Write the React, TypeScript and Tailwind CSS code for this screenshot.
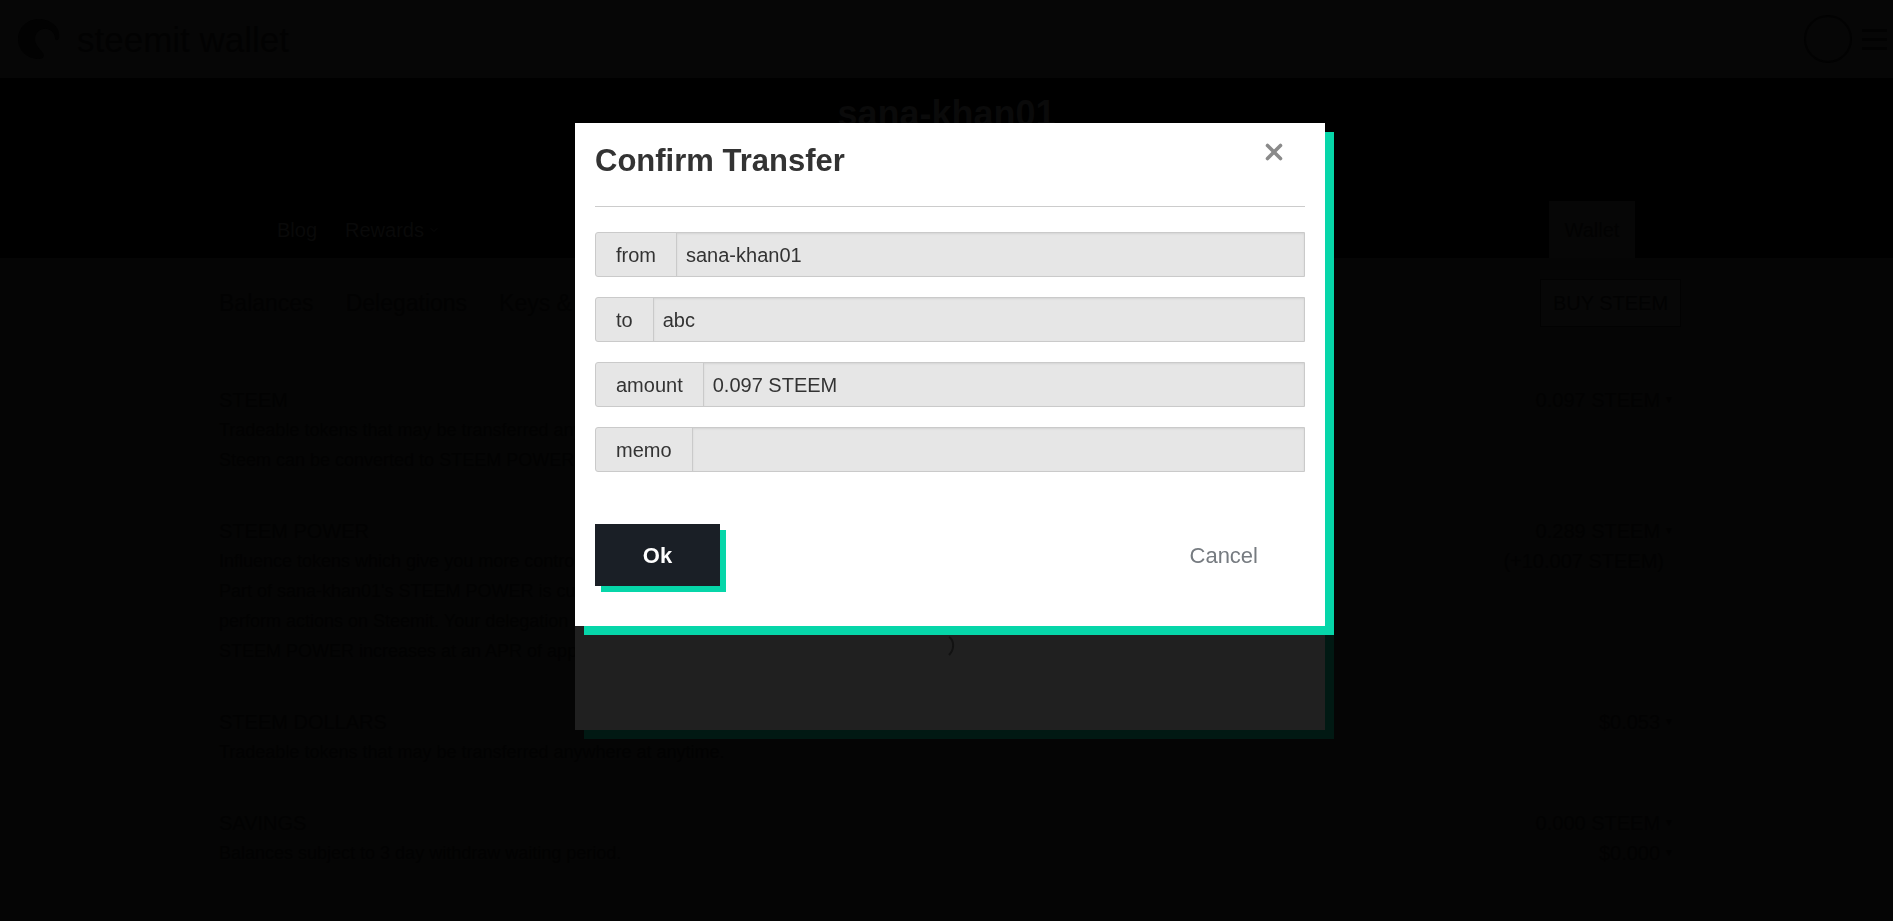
import { ChevronDown, X } from 'lucide-react'

const fields = [
    { label: 'from', value: 'sana-khan01' },
    { label: 'to', value: 'abc' },
    { label: 'amount', value: '0.097 STEEM' },
    { label: 'memo', value: '' },
]

const sections = [
    {
        title: 'STEEM',
        lines: [
            'Tradeable tokens that may be transferred anywhere at anytime.',
            'Steem can be converted to STEEM POWER in a process called powering up.',
        ],
        values: ['0.097 STEEM'],
        extra: null as string | null,
    },
    {
        title: 'STEEM POWER',
        lines: [
            'Influence tokens which give you more control over post payouts and allow you to earn on curation rewards.',
            "Part of sana-khan01's STEEM POWER is currently delegated. Delegation is donated for influence or to help new users",
            'perform actions on Steemit. Your delegation amount can fluctuate.',
            'STEEM POWER increases at an APR of approximately 3.00%, subject to blockchain variance. See FAQ for details.',
        ],
        values: ['0.289 STEEM'],
        extra: '(+10.007 STEEM)',
    },
    {
        title: 'STEEM DOLLARS',
        lines: ['Tradeable tokens that may be transferred anywhere at anytime.'],
        values: ['$0.053'],
        extra: null,
    },
    {
        title: 'SAVINGS',
        lines: ['Balances subject to 3 day withdraw waiting period.'],
        values: ['0.000 STEEM', '$0.000'],
        extra: null,
    },
]

function SteemitLogo() {
    return (
        <svg width="51" height="46" viewBox="0 0 51 46" fill="none">
            <path
                d="M25 3C13 3 4 12 4 23s9 20 21 20c4 0 6-3 4-6-3-4-8-8-8-14 0-7 6-11 12-10 5 1 8 5 8 9 0 3 3 3 4 0 2-10-8-19-20-19z"
                fill="#020202"
            />
        </svg>
    )
}

function BackgroundPage() {
    return (
        <div className="min-h-screen bg-[#050505]">
            <header className="flex h-[78px] items-center justify-between bg-[#060606] pl-[14px] pr-[6px]">
                <div className="flex items-center gap-3">
                    <SteemitLogo />
                    <span className="text-[35px] leading-none text-[#020202]">steemit wallet</span>
                </div>
                <div className="flex items-center gap-[10px]">
                    <div className="h-[48px] w-[48px] rounded-full border-2 border-[#020202]" />
                    <div className="flex w-[25px] flex-col gap-[6px]">
                        <span className="h-[3px] bg-[#020202]" />
                        <span className="h-[3px] bg-[#020202]" />
                        <span className="h-[3px] bg-[#020202]" />
                    </div>
                </div>
            </header>

            <section className="flex h-[180px] flex-col bg-black">
                <h1 className="mt-[15px] text-center text-[36px] font-bold leading-[41px] text-[#0a0a0a]">
                    sana-khan01
                </h1>
                <nav className="mx-auto mt-auto flex h-[57px] w-[1455px] items-center pl-[58px] pr-[39px] text-[20px] text-[#090909]">
                    <span>Blog</span>
                    <span className="ml-7 flex items-center gap-1">
                        Rewards <ChevronDown className="h-3 w-3" />
                    </span>
                    <span className="ml-auto flex h-full w-[86px] items-center justify-center bg-[#060606] text-[#020202]">
                        Wallet
                    </span>
                </nav>
            </section>

            <main className="mx-auto w-[1455px] pt-[21px] text-[#020202]">
                <div className="flex items-center">
                    <div className="flex gap-8 text-[23px]">
                        <span>Balances</span>
                        <span>Delegations</span>
                        <span>Keys &amp; Permissions</span>
                        <span>Change Password</span>
                    </div>
                    <button className="ml-auto mr-[-7px] h-[48px] w-[141px] border border-[#020202] bg-[#070707] text-[20px]">
                        BUY STEEM
                    </button>
                </div>

                <div className="mt-[58px] flex flex-col gap-[41px]">
                    {sections.map((s) => (
                        <div key={s.title} className="flex justify-between">
                            <div>
                                <div className="text-[20px] leading-[30px]">{s.title}</div>
                                {s.lines.map((l) => (
                                    <div key={l} className="text-[18px] leading-[30px]">
                                        {l}
                                    </div>
                                ))}
                            </div>
                            <div className="flex flex-col items-end text-[20px] leading-[30px]">
                                {s.values.map((v) => (
                                    <span key={v} className="flex items-center gap-1">
                                        {v}
                                        <span className="text-[10px]">▼</span>
                                    </span>
                                ))}
                                {s.extra && <span className="pr-[10px]">{s.extra}</span>}
                            </div>
                        </div>
                    ))}
                </div>
            </main>
        </div>
    )
}

function FieldRow({ label, value }: { label: string; value: string }) {
    return (
        <div className="flex h-[45px] rounded-l-[3px] border border-[#cacaca] bg-[#e6e6e6] text-[20px] text-[#333]">
            <div className="flex items-center border-r border-[#cacaca] px-5">{label}</div>
            <div className="flex flex-1 items-center pl-[9px] shadow-[inset_0_1px_2px_rgba(0,0,0,0.08)]">
                {value}
            </div>
        </div>
    )
}

function ConfirmTransferModal() {
    return (
        <div className="fixed inset-0 pl-[575px] pt-[123px]">
            <div className="flex w-[750px] flex-col">
                <div className="relative z-10 bg-white px-5 pb-[40px] pt-5 shadow-[9px_9px_0_#06d6a9]">
                    <h2 className="text-[31px] font-bold leading-[36px] text-[#333]">Confirm Transfer</h2>
                    <button className="absolute right-[38px] top-[16px] text-[#8a8a8a]">
                        <X className="h-[26px] w-[26px]" strokeWidth={3.3} />
                    </button>
                    <div className="mt-[27px] border-t border-[#cccccc]" />

                    <div className="mt-[25px] flex flex-col gap-5">
                        {fields.map((f) => (
                            <FieldRow key={f.label} label={f.label} value={f.value} />
                        ))}
                    </div>

                    <div className="mt-[52px] flex items-center justify-between">
                        <button className="h-[62px] w-[125px] bg-[#1a1f26] text-[22px] font-bold text-white shadow-[6px_6px_0_#06d6a9]">
                            Ok
                        </button>
                        <button className="mr-[47px] text-[22px] text-[#767b80]">Cancel</button>
                    </div>
                </div>
                <div className="h-[104px] bg-[#202020] pl-[371px] pt-[10px] shadow-[9px_9px_0_#011913]">
                    <svg width="12" height="20" viewBox="0 0 12 20" fill="none">
                        <path d="M3 1c5 3 6 12 0 18" stroke="#121212" strokeWidth="2" />
                    </svg>
                </div>
            </div>
        </div>
    )
}

export default function App() {
    return (
        <div className="relative min-h-screen font-['Liberation_Sans',Arial,sans-serif]">
            <BackgroundPage />
            <ConfirmTransferModal />
        </div>
    )
}
